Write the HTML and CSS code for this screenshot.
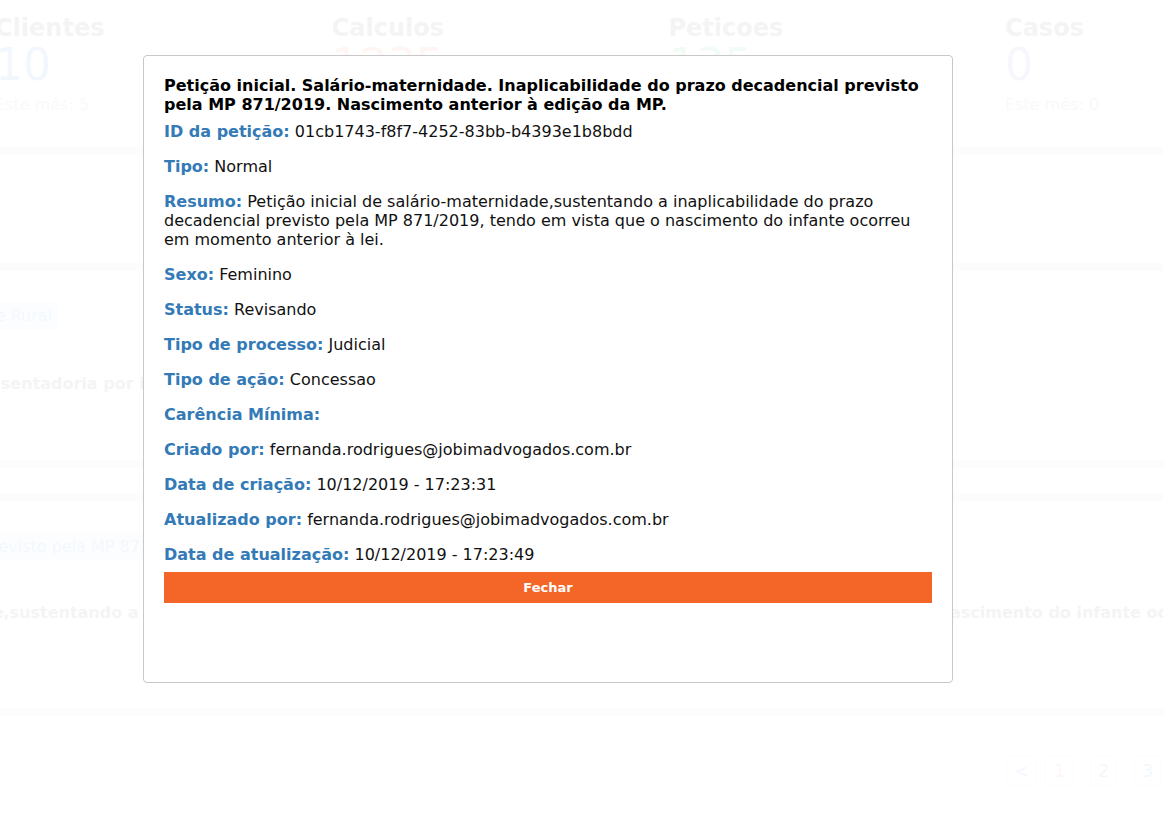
FILE: index.html
```html
<!DOCTYPE html>
<html lang="pt-BR">
<head>
<meta charset="utf-8">
<title>Petição</title>
<link rel="stylesheet" href="styles.css">
</head>
<body>
<div class="page">
  <div class="stats">
    <div class="stat">
      <div class="stat-title">Clientes</div>
      <div class="stat-num num-blue">10</div>
      <div class="stat-sub">Este mês: 5</div>
    </div>
    <div class="stat">
      <div class="stat-title">Calculos</div>
      <div class="stat-num num-orange">1235</div>
      <div class="stat-sub">Este mês: 12</div>
    </div>
    <div class="stat">
      <div class="stat-title">Peticoes</div>
      <div class="stat-num num-green">135</div>
      <div class="stat-sub">Este mês: 3</div>
    </div>
    <div class="stat">
      <div class="stat-title">Casos</div>
      <div class="stat-num num-purple">0</div>
      <div class="stat-sub">Este mês: 0</div>
    </div>
  </div>

  <div class="card card-filter"></div>

  <div class="card row row-one">
    <div class="tags"><span class="tag">Aposentadoria por Idade Rural</span></div>
    <div class="row-title">Aposentadoria por idade rural.</div>
  </div>

  <div class="card card-spacer"></div>

  <div class="card row row-two">
    <div class="tags"><span class="tag">Inaplicabilidade do prazo decadencial previsto pela MP 871/2019</span></div>
    <div class="row-title">Petição inicial de salário-maternidade,sustentando a inaplicabilidade do prazo decadencial previsto pela MP 871/2019, tendo em vista que o nascimento do infante ocorreu em momento anterior à lei.</div>
  </div>

  <div class="card pager">
    <span class="pg pg-arrow">&lt;</span>
    <span class="pg pg-active">1</span>
    <span class="pg pg-two">2</span>
    <span class="pg pg-three">3</span>
  </div>
</div>

<div class="overlay">
  <div class="modal">
    <h4 class="modal-title">Petição inicial. Salário-maternidade. Inaplicabilidade do prazo decadencial previsto pela MP 871/2019. Nascimento anterior à edição da MP.</h4>
    <div class="fields">
      <p class="field"><b>ID da petição:</b> 01cb1743-f8f7-4252-83bb-b4393e1b8bdd</p>
      <p class="field"><b>Tipo:</b> Normal</p>
      <p class="field"><b>Resumo:</b> Petição inicial de salário-maternidade,sustentando a inaplicabilidade do prazo decadencial previsto pela MP 871/2019, tendo em vista que o nascimento do infante ocorreu em momento anterior à lei.</p>
      <p class="field"><b>Sexo:</b> Feminino</p>
      <p class="field"><b>Status:</b> Revisando</p>
      <p class="field"><b>Tipo de processo:</b> Judicial</p>
      <p class="field"><b>Tipo de ação:</b> Concessao</p>
      <p class="field"><b>Carência Mínima:</b> </p>
      <p class="field"><b>Criado por:</b> fernanda.rodrigues@jobimadvogados.com.br</p>
      <p class="field"><b>Data de criação:</b> 10/12/2019 - 17:23:31</p>
      <p class="field"><b>Atualizado por:</b> fernanda.rodrigues@jobimadvogados.com.br</p>
      <p class="field"><b>Data de atualização:</b> 10/12/2019 - 17:23:49</p>
    </div>
    <button class="btn-close" type="button">Fechar</button>
  </div>
</div>
</body>
</html>
```

FILE: styles.css
```css
html, body {
  margin: 0;
  padding: 0;
  background: #ffffff;
  overflow: hidden;
}

body {
  font-family: "DejaVu Sans", "Liberation Sans", sans-serif;
  width: 1163px;
  height: 815px;
}

/* ---------- faded page behind the modal ---------- */
.page {
  opacity: 0.055;
  margin-left: -20px;
  width: 1200px;
  height: 815px;
  color: #333;
  background: #dcdcdc;
  display: flex;
  flex-direction: column;
  gap: 8px;
}

.card {
  background: #ffffff;
  flex-shrink: 0;
}

.stats {
  display: flex;
  height: 147px;
  background: #ffffff;
  flex-shrink: 0;
}

.stat {
  flex: 0 0 336.7px;
  padding: 13px 15px 0;
  box-sizing: border-box;
}

.stat-title {
  font-size: 24px;
  font-weight: bold;
  line-height: 30px;
  color: #444;
}

.stat-num {
  font-size: 44px;
  line-height: 48px;
  margin-top: -2px;
}

.num-blue { color: #2e86de; }
.num-orange { color: #f36628; }
.num-green { color: #2ecc71; }
.num-purple { color: #8e6fd8; }

.stat-sub {
  font-size: 16px;
  line-height: 20px;
  margin-top: 6px;
  color: #999;
}

.card-filter { height: 108px; }
.card-spacer { height: 25px; }

.row {
  box-sizing: border-box;
}

.row-one {
  height: 189px;
  padding-top: 31px;
}

.row-two {
  height: 207px;
  padding-top: 32px;
}

.tags {
  display: flex;
}

.tag {
  background: #dceafa;
  color: #2e86de;
  font-size: 16px;
  line-height: 20px;
  padding: 4px 5px;
  white-space: nowrap;
}

/* the tags begin to the left of the visible area */
.row-one .tags {
  width: 77px;
  justify-content: flex-end;
}

.row-two .tag {
  margin-left: -310px;
}

.row-title {
  font-size: 16px;
  font-weight: bold;
  line-height: 20px;
  white-space: nowrap;
  color: #444;
}

.row-one .row-title {
  margin-top: 44px;
  margin-left: -14px;
}

.row-two .row-title {
  margin-top: 42px;
  margin-left: -319px;
}

.pager {
  flex: 1;
  display: flex;
  justify-content: flex-end;
  align-items: flex-start;
  padding-top: 40px;
  padding-right: 19px;
}

.pg {
  width: 27px;
  height: 30px;
  box-sizing: border-box;
  border: 1px solid #ccc;
  font-size: 18px;
  line-height: 28px;
  text-align: center;
  color: #2e86de;
}

.pg-arrow { width: 31px; }
.pg-active { width: 29px; margin-left: 8px; color: #f36628; }
.pg-two { margin-left: 16px; }
.pg-three { margin-left: 17px; }

/* ---------- modal ---------- */
.overlay {
  position: fixed;
  inset: 0;
  padding: 55px 0 0 143px;
}

.modal {
  width: 810px;
  height: 628px;
  box-sizing: border-box;
  background: #ffffff;
  border: 1px solid #c8c8c8;
  border-radius: 4px;
  padding: 20px;
  color: #000;
}

.modal-title {
  margin: 0 0 8px;
  font-size: 16px;
  line-height: 19px;
  font-weight: bold;
  color: #000;
}

.fields {
  display: flex;
  flex-direction: column;
  gap: 16px;
}

.field {
  margin: 0;
  font-size: 16px;
  line-height: 19px;
  min-height: 19px;
  color: #111;
}

.field b {
  color: #337ab7;
}

.btn-close {
  display: block;
  width: 100%;
  height: 31px;
  margin-top: 8px;
  border: 0;
  background: #f36628;
  color: #ffffff;
  font-family: "DejaVu Sans", sans-serif;
  font-size: 13px;
  font-weight: bold;
  cursor: pointer;
}
```
